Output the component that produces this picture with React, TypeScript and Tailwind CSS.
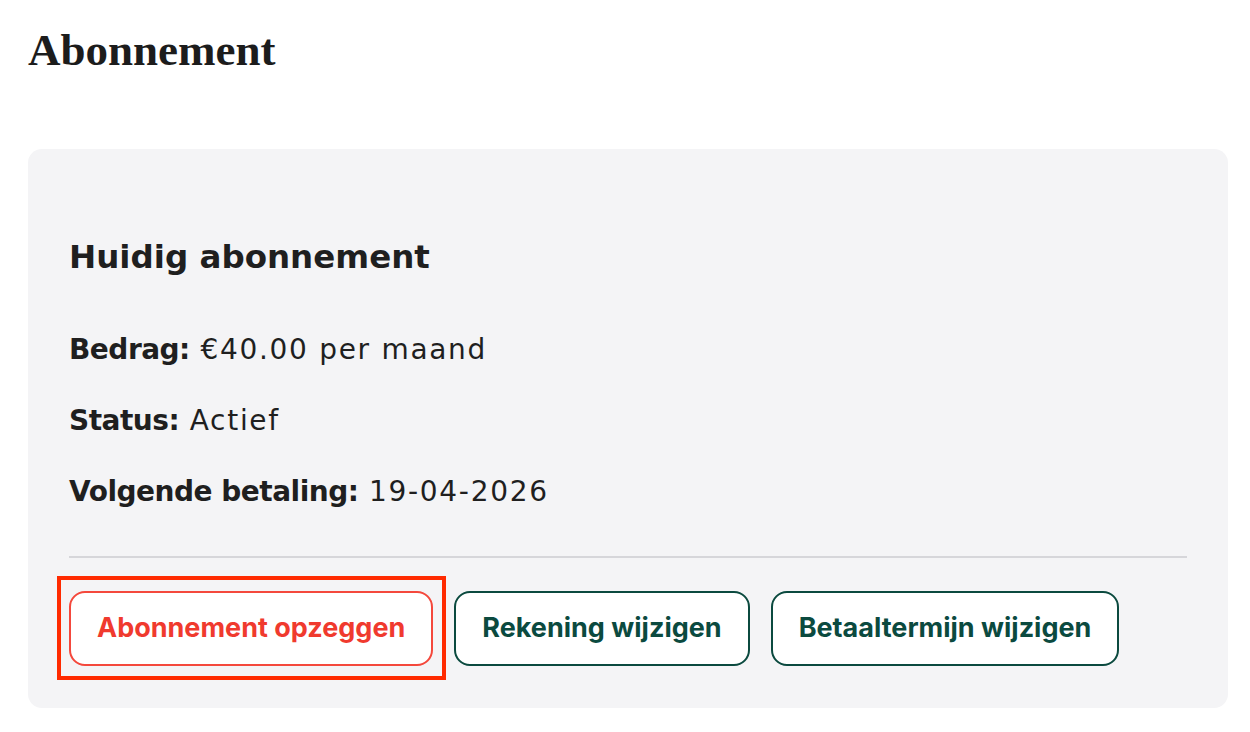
export default function App() {
  return (
    <div className="min-h-[732px] w-[1250px] bg-white px-[28px] pt-[18px]">
      <h1
        className="text-[45px] font-bold leading-[64px] text-[#1c1c1c]"
        style={{ fontFamily: '"Liberation Serif", serif' }}
      >
        Abonnement
      </h1>
      <div
        className="mt-[67px] w-[1200px] rounded-[14px] bg-[#f4f4f6] px-[41px] pt-[88px] pb-[42px] text-[#1f1f1f]"
        style={{ fontFamily: '"DejaVu Sans", sans-serif' }}
      >
        <h2 className="text-[32.5px] font-bold leading-[40px]">Huidig abonnement</h2>
        <div className="mt-[53px] flex flex-col gap-[31px] text-[28px] leading-[40px] tracking-[1.7px]">
          <p>
            <span className="font-bold tracking-[-0.5px]">Bedrag:</span> €40.00 per maand
          </p>
          <p>
            <span className="font-bold tracking-[-0.5px]">Status:</span> Actief
          </p>
          <p>
            <span className="font-bold tracking-[-0.5px]">Volgende betaling:</span> 19-04-2026
          </p>
        </div>
        <div className="mt-[44px] h-[2px] w-[1118px] bg-[#d6d6da]" />
        <div
          className="mt-[33px] flex gap-[21px]"
          style={{ fontFamily: 'Inter, sans-serif' }}
        >
          <div className="relative">
            <button className="flex h-[75px] items-center rounded-[16px] border-2 border-[#f4483c] bg-white px-[26px] text-[27px] font-bold text-[#f03a2e]">
              Abonnement opzeggen
            </button>
            <div className="pointer-events-none absolute -top-[15px] -bottom-[14px] -left-[12px] -right-[13px] border-[4px] border-[#ff2a00]" />
          </div>
          <button className="flex h-[75px] items-center rounded-[16px] border-2 border-[#0b4a3f] bg-white px-[26px] text-[27px] font-bold text-[#0b4a3f]">
            Rekening wijzigen
          </button>
          <button className="flex h-[75px] items-center rounded-[16px] border-2 border-[#0b4a3f] bg-white px-[26px] text-[27px] font-bold text-[#0b4a3f]">
            Betaaltermijn wijzigen
          </button>
        </div>
      </div>
    </div>
  );
}
